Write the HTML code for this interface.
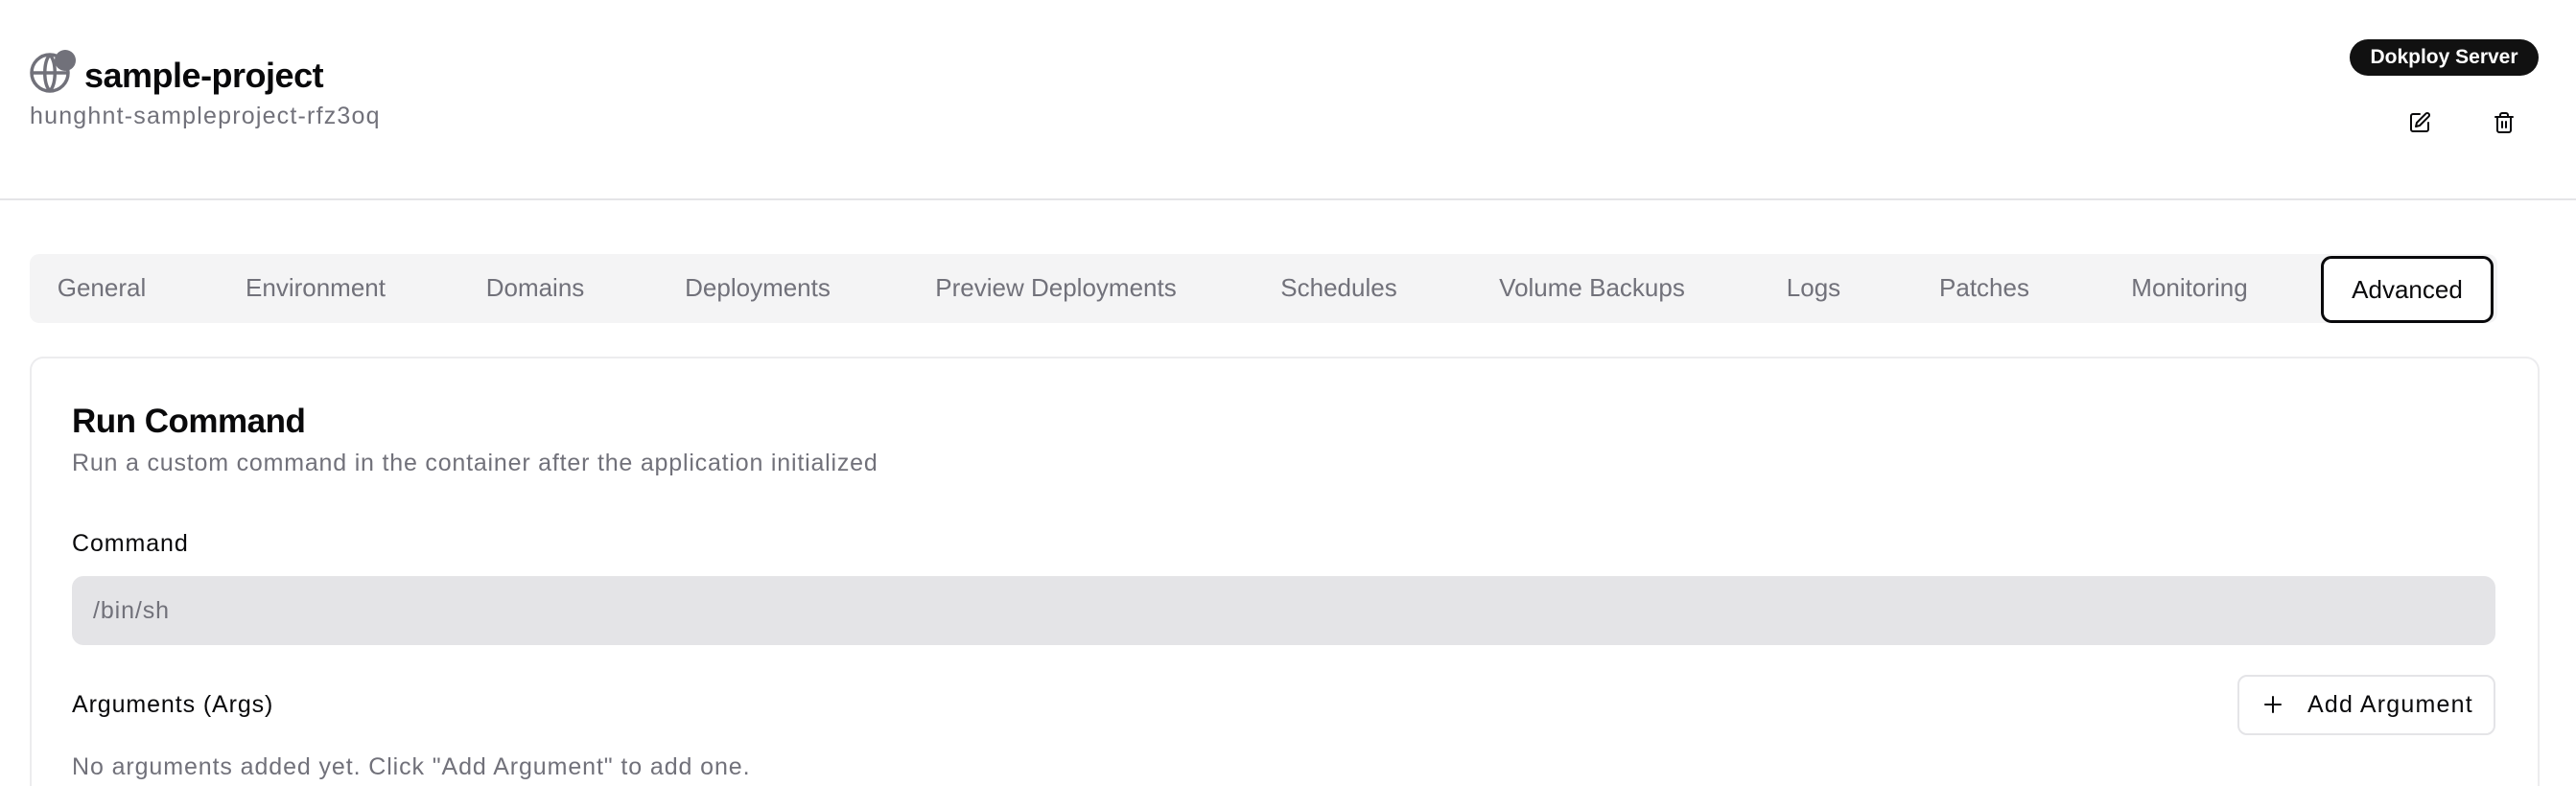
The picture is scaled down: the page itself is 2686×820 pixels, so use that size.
<!DOCTYPE html>
<html><head><meta charset="utf-8"><style>
*{box-sizing:border-box;margin:0;padding:0}
html,body{width:2686px;height:820px;overflow:hidden}
body{background:#fff;font-family:"Liberation Sans",sans-serif;color:#09090b;position:relative}
.a{position:absolute;white-space:nowrap}
.tab{position:absolute;top:285px;font-size:26px;color:#71717a;transform:translateX(-50%)}
.g{color:#71717a}
.t{font-size:25px;letter-spacing:0.9px}
</style></head><body>
<svg class="a" style="left:30px;top:50px" width="50" height="48" viewBox="0 0 50 48">
<circle cx="22" cy="26" r="19" fill="none" stroke="#71717a" stroke-width="3.5"/>
<path d="M3 26h38M22 7c-7 8-7 30 0 38M22 7c7 8 7 30 0 38" fill="none" stroke="#71717a" stroke-width="3.5"/>
<circle cx="38" cy="13" r="11" fill="#71717a"/>
</svg>
<div class="a" style="left:88px;top:58px;font-size:36px;font-weight:bold;letter-spacing:-0.5px">sample-project</div>
<div class="a g t" style="left:31px;top:107px;letter-spacing:1.2px">hunghnt-sampleproject-rfz3oq</div>
<div class="a" style="left:2450px;top:41px;width:197px;height:38px;border-radius:19px;background:#111;color:#fff;font-weight:bold;font-size:21px;text-align:center;line-height:38px">Dokploy Server</div>
<svg class="a" style="left:2511px;top:116px" width="24" height="24" viewBox="0 0 24 24" fill="none" stroke="#09090b" stroke-width="2" stroke-linecap="round" stroke-linejoin="round"><path d="M12 3H5a2 2 0 0 0-2 2v14a2 2 0 0 0 2 2h14a2 2 0 0 0 2-2v-7"/><path d="M18.4 2.6a2.1 2.1 0 0 1 3 3L12 15l-4 1 1-4z"/></svg>
<svg class="a" style="left:2599px;top:116px" width="24" height="24" viewBox="0 0 24 24" fill="none" stroke="#09090b" stroke-width="2" stroke-linecap="round" stroke-linejoin="round"><path d="M3 6h18M19 6v14a2 2 0 0 1-2 2H7a2 2 0 0 1-2-2V6M8 6V4a2 2 0 0 1 2-2h4a2 2 0 0 1 2 2v2M10 11v6M14 11v6"/></svg>
<div class="a" style="left:0;top:207px;width:2686px;height:2px;background:#e4e4e7"></div>
<div class="a" style="left:31px;top:265px;width:2573px;height:72px;background:#f4f4f5;border-radius:10px"></div>
<div class="tab" style="left:106px">General</div>
<div class="tab" style="left:329px">Environment</div>
<div class="tab" style="left:558px">Domains</div>
<div class="tab" style="left:790px">Deployments</div>
<div class="tab" style="left:1101px">Preview Deployments</div>
<div class="tab" style="left:1396px">Schedules</div>
<div class="tab" style="left:1660px">Volume Backups</div>
<div class="tab" style="left:1891px">Logs</div>
<div class="tab" style="left:2069px">Patches</div>
<div class="tab" style="left:2283px">Monitoring</div>
<div class="a" style="left:2420px;top:267px;width:180px;height:70px;border:3px solid #09090b;border-radius:11px;background:#fff;font-size:26px;text-align:center;line-height:64px">Advanced</div>
<div class="a" style="left:31px;top:372px;width:2617px;height:448px;border:2px solid #ececee;border-bottom:none;border-radius:14px 14px 0 0"></div>
<div class="a" style="left:75px;top:420px;font-size:35px;font-weight:bold;letter-spacing:-0.5px">Run Command</div>
<div class="a g t" style="left:75px;top:469px;letter-spacing:0.8px">Run a custom command in the container after the application initialized</div>
<div class="a t" style="left:75px;top:553px">Command</div>
<div class="a g t" style="left:75px;top:601px;width:2527px;height:72px;background:#e4e4e7;border-radius:12px;line-height:72px;padding-left:22px">/bin/sh</div>
<div class="a t" style="left:75px;top:721px">Arguments (Args)</div>
<div class="a" style="left:2333px;top:704px;width:269px;height:63px;border:2px solid #e4e4e7;border-radius:10px;background:#fff"></div>
<svg class="a" style="left:2358px;top:723px" width="24" height="24" viewBox="0 0 24 24" fill="none" stroke="#09090b" stroke-width="2" stroke-linecap="round"><path d="M12 4v16M4 12h16"/></svg>
<div class="a" style="left:2406px;top:721px;font-size:25px;letter-spacing:1.2px">Add Argument</div>
<div class="a g t" style="left:75px;top:786px">No arguments added yet. Click "Add Argument" to add one.</div>
</body></html>
